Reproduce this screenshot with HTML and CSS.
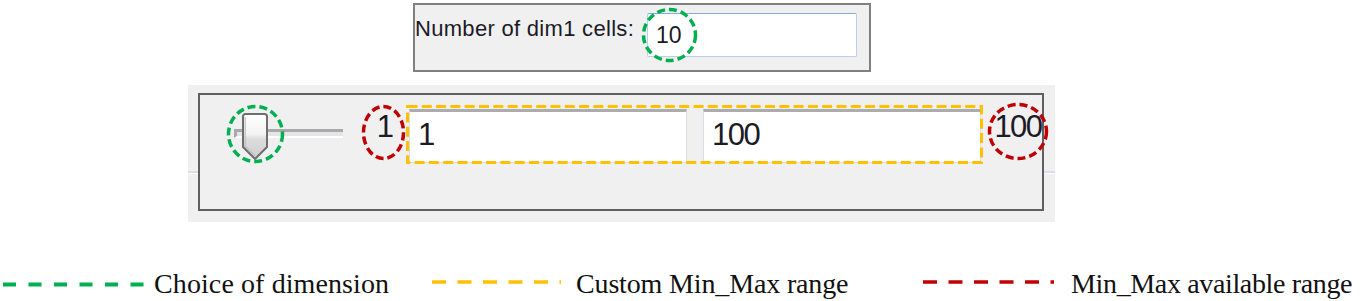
FILE: index.html
```html
<!DOCTYPE html>
<html lang="en">
<head>
  <meta charset="UTF-8" />
  <meta name="viewport" content="width=device-width, initial-scale=1.0"/>
  <title>Dimension range controls</title>
  <link rel="stylesheet" href="styles.css">
</head>
<body>
  <div class="figure">
    <div class="cells-panel">
      <span class="cells-label">Number of dim1 cells:</span>
      <div class="cells-input">10</div>
    </div>

    <div class="range-area">
      <div class="range-box">
        <div class="range-row">
          <div class="slider">
            <div class="slider-track"></div>
            <svg class="slider-thumb" viewBox="0 0 26 47" width="26" height="47">
              <defs>
                <linearGradient id="thumbFill" x1="0" y1="0" x2="0" y2="1">
                  <stop offset="0" stop-color="#ffffff"/>
                  <stop offset="0.45" stop-color="#f3f3f3"/>
                  <stop offset="0.55" stop-color="#dddddd"/>
                  <stop offset="1" stop-color="#cdcdcd"/>
                </linearGradient>
              </defs>
              <path d="M1 3.5 Q1 1 3.5 1 H22.5 Q25 1 25 3.5 V34 L13 46 L1 34 Z" fill="url(#thumbFill)" stroke="#6e6e6e" stroke-width="2"/>
              <path d="M3.2 4 V33.3 L13 43" fill="none" stroke="#bdbdbd" stroke-width="1.2"/>
            </svg>
          </div>
          <span class="range-limit limit-min">1</span>
          <div class="range-fields">
            <div class="range-field">1</div>
            <div class="range-field">100</div>
          </div>
          <span class="range-limit limit-max">100</span>
        </div>
      </div>
    </div>

    <div class="legend">
      <div class="legend-item">
        <svg width="142" height="32"><line x1="0" y1="17.4" x2="142" y2="17.4" class="dash-green"/></svg>
        <span class="legend-text text-green">Choice of dimension</span>
      </div>
      <div class="legend-item">
        <svg width="129" height="32"><line x1="0" y1="15" x2="129" y2="15" class="dash-yellow"/></svg>
        <span class="legend-text text-yellow">Custom Min_Max range</span>
      </div>
      <div class="legend-item">
        <svg width="131" height="32"><line x1="0" y1="15" x2="131" y2="15" class="dash-red"/></svg>
        <span class="legend-text text-red">Min_Max available range</span>
      </div>
    </div>

    <!-- annotation marks drawn over the screenshot -->
    <svg class="marks" width="1366" height="301">
      <ellipse cx="669.5" cy="35" rx="26" ry="25.5" class="ring ring-green"/>
      <ellipse cx="255.5" cy="134" rx="27" ry="27.5" class="ring ring-green"/>
      <ellipse cx="383.5" cy="132.5" rx="20" ry="26" class="ring ring-red"/>
      <ellipse cx="1018" cy="131.5" rx="28.5" ry="27" class="ring ring-red"/>
      <rect x="407.5" y="106.5" width="574" height="56" class="ring ring-yellow"/>
    </svg>
  </div>
</body>
</html>
```

FILE: styles.css
```css
* {
  box-sizing: border-box;
}

body {
  margin: 0;
  background: #fff;
  font-family: "Liberation Sans", Arial, sans-serif;
  color: #1b1b26;
}

.figure {
  position: relative;
  width: 1366px;
  height: 301px;
  overflow: hidden;
}

/* top: number of cells */
.cells-panel {
  display: flex;
  align-items: flex-start;
  width: 458px;
  height: 69px;
  margin: 3px 0 0 413px;
  padding: 0 12px 0 0;
  border: 2px solid #808080;
  background: #f0f0f0;
}

.cells-label {
  margin-top: 11px;
  font-size: 22px;
  line-height: 26px;
  letter-spacing: 0.3px;
  white-space: nowrap;
}

.cells-input {
  width: 210px;
  height: 44px;
  margin: 8px 0 0 auto;
  padding-left: 8px;
  background: #fff;
  border: 1px solid #b8d0e9;
  border-top-color: #84acd8;
  border-radius: 2px;
  font-size: 23px;
  line-height: 42px;
}

/* middle: range selector */
.range-area {
  width: 867px;
  height: 137px;
  margin: 13px 0 0 188px;
  padding: 8px 0 0 10px;
  background: linear-gradient(to bottom, #f0f0f0 86px, #d7dee6 86px, #d7dee6 88px, #fff 88px, #fff 89px, #f0f0f0 89px);
}

.range-box {
  width: 846px;
  height: 118px;
  padding: 14px 0 0 34px;
  border: 2px solid #5f5f5f;
  background: #f0f0f0;
}

.range-row {
  display: flex;
  align-items: flex-start;
}

.range-row > * {
  flex-shrink: 0;
}

.slider {
  position: relative;
  width: 109px;
  height: 47px;
  margin-top: 4px;
}

.slider-track {
  height: 9px;
  margin-top: 16px;
  border-top: 3px solid #a9a9a9;
  border-left: 3px solid #a9a9a9;
  border-bottom: 2px solid #fff;
  background: #e3e5e8;
}

.slider-thumb {
  position: absolute;
  left: 8px;
  top: 0;
}

.range-limit {
  font-size: 31px;
  line-height: 36px;
  letter-spacing: -1.5px;
  text-align: center;
  white-space: nowrap;
}

.limit-min {
  width: 26px;
  margin-left: 28.5px;
}

.limit-max {
  width: 48px;
  margin-left: 13px;
}

.range-fields {
  display: flex;
  gap: 16px;
  margin-left: 11.5px;
}

.range-field {
  width: 278px;
  height: 54px;
  padding: 5px 0 0 8px;
  background: #fff;
  border: 1px solid #dcdde3;
  border-top: 3px solid #acacac;
  font-size: 31px;
  line-height: 36px;
  letter-spacing: -1.5px;
}

/* bottom: legend */
.legend {
  display: grid;
  grid-template-columns: 429px 491px 1fr;
  margin-top: 45px;
  padding-left: 3px;
  font-family: "Liberation Serif", "Times New Roman", serif;
  font-size: 28px;
  line-height: 32px;
  color: #111;
}

.legend-item {
  display: flex;
  align-items: flex-start;
  white-space: nowrap;
}

.legend-item svg {
  flex-shrink: 0;
}

.legend-text {
  margin-top: 1px;
}

.text-green {
  margin-left: 9px;
  letter-spacing: 0.1px;
}

.text-yellow {
  margin-left: 15px;
  letter-spacing: -0.15px;
}

.text-red {
  margin-left: 17px;
  letter-spacing: -0.35px;
}

.dash-green {
  stroke: #00b050;
  stroke-width: 4;
  stroke-dasharray: 13 12.5;
}

.dash-yellow {
  stroke: #ffc000;
  stroke-width: 3.5;
  stroke-dasharray: 14 11.5;
}

.dash-red {
  stroke: #c00000;
  stroke-width: 3.5;
  stroke-dasharray: 14 11.5;
}

.marks {
  position: absolute;
  left: 0;
  top: 0;
  pointer-events: none;
}

.ring {
  fill: none;
  stroke-width: 3.5;
  stroke-dasharray: 8 4;
}

.ring-green {
  stroke: #00b050;
}

.ring-red {
  stroke: #c00000;
}

.ring-yellow {
  stroke: #ffc000;
  stroke-width: 3;
  stroke-dasharray: 10 4.3;
}
```
